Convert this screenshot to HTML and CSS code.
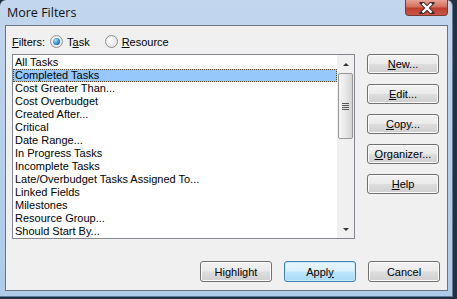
FILE: index.html
```html
<!DOCTYPE html>
<html lang="en">
<head>
    <meta charset="UTF-8">
    <title>More Filters</title>
    <link rel="stylesheet" href="styles.css">
</head>
<body>
    <div class="window">
        <div class="titlebar">
            <span class="title">More Filters</span>
            <div class="close">
                <svg width="16" height="12" viewBox="0 0 16 12">
                    <path d="M3 1 L13 11 M13 1 L3 11" stroke="#3a2a2a" stroke-width="4.2" stroke-linecap="square"/>
                    <path d="M3.5 1.5 L12.5 10.5 M12.5 1.5 L3.5 10.5" stroke="#fff" stroke-width="2.4"/>
                </svg>
            </div>
        </div>
        <div class="client">
            <div class="main">
                <div class="left">
                    <div class="filters">
                        <span class="lbl"><u>F</u>ilters:</span>
                        <span class="radio checked"></span>
                        <span class="opt">T<u>a</u>sk</span>
                        <span class="radio"></span>
                        <span class="opt"><u>R</u>esource</span>
                    </div>
                    <div class="listbox">
                        <ul class="items">
                            <li>All Tasks</li>
                            <li class="sel">Completed Tasks</li>
                            <li>Cost Greater Than...</li>
                            <li>Cost Overbudget</li>
                            <li>Created After...</li>
                            <li>Critical</li>
                            <li>Date Range...</li>
                            <li>In Progress Tasks</li>
                            <li>Incomplete Tasks</li>
                            <li>Late/Overbudget Tasks Assigned To...</li>
                            <li>Linked Fields</li>
                            <li>Milestones</li>
                            <li>Resource Group...</li>
                            <li>Should Start By...</li>
                        </ul>
                        <div class="scrollbar">
                            <div class="arrow up"></div>
                            <div class="thumb"><span class="grip"></span></div>
                            <div class="track"></div>
                            <div class="arrow down"></div>
                        </div>
                    </div>
                </div>
                <div class="side">
                    <button class="btn"><u>N</u>ew...</button>
                    <button class="btn"><u>E</u>dit...</button>
                    <button class="btn"><u>C</u>opy...</button>
                    <button class="btn"><u>O</u>rganizer...</button>
                    <button class="btn"><u>H</u>elp</button>
                </div>
            </div>
            <div class="bottom">
                <button class="btn">Hi<u>g</u>hlight</button>
                <button class="btn default">Appl<u>y</u></button>
                <button class="btn">Cancel</button>
            </div>
        </div>
    </div>
</body>
</html>
```

FILE: styles.css
```css
body {
    margin: 0;
    width: 457px;
    height: 299px;
    overflow: hidden;
    background: #22303f;
    font-family: "Liberation Sans", Arial, sans-serif;
    font-size: 11px;
    color: #000;
}
.window {
    position: relative;
    width: 453px;
    height: 297px;
    box-sizing: border-box;
    padding: 0 4px 5px 5px;
    display: flex;
    flex-direction: column;
    background: linear-gradient(180deg, #c2d7ee 0%, #b8d0ea 40%, #aecbe9 100%);
    border-right: 1px solid #5d7a99;
    border-bottom: 1px solid #5d7a99;
    border-radius: 6px 6px 0 0;
}
.titlebar {
    height: 25px;
    flex: none;
}
.title {
    display: block;
    padding: 4px 0 0 2px;
    font-family: "Open Sans", "Noto Sans", sans-serif;
    font-size: 12.5px;
    color: #111;
}
.close {
    position: absolute;
    top: 0;
    left: 405px;
    width: 43px;
    height: 16px;
    box-sizing: border-box;
    border: 1px solid #7b3a30;
    border-top: none;
    border-radius: 0 0 4px 4px;
    background: linear-gradient(180deg, #e8a394 0%, #d5705e 45%, #bf3e2a 55%, #c9574a 100%);
    display: flex;
    align-items: center;
    justify-content: center;
}
.client {
    flex: 1;
    background: #f0f0f0;
    border: 1px solid #6c7380;
    display: flex;
    flex-direction: column;
    padding: 0 6px 0 6px;
}
.main {
    display: flex;
}
.left {
    display: flex;
    flex-direction: column;
}
.filters {
    display: flex;
    align-items: center;
    height: 13px;
    margin-top: 9px;
    margin-bottom: 6px;
}
.lbl {
    margin-right: 5px;
}
.radio {
    width: 11px;
    height: 11px;
    border: 1px solid #8f8f8f;
    border-radius: 50%;
    background: radial-gradient(circle at 40% 40%, #ffffff, #dcdcdc);
    margin-right: 4px;
    position: relative;
}
.radio.checked::after {
    content: "";
    position: absolute;
    left: 2px;
    top: 2px;
    width: 7px;
    height: 7px;
    border-radius: 50%;
    background: radial-gradient(circle at 35% 35%, #9ee0ff, #1b6fb8 70%, #0f4a86);
}
.opt {
    margin-right: 15px;
}
.listbox {
    width: 343px;
    height: 185px;
    box-sizing: border-box;
    border: 1px solid #828790;
    background: #fff;
    display: flex;
}
.items {
    list-style: none;
    margin: 0;
    padding: 1px 0 0;
    flex: 1;
}
.items li {
    height: 13px;
    line-height: 13px;
    padding-left: 2px;
    white-space: nowrap;
}
.items li.sel {
    background: #96c8fb;
    outline: 1px dotted #5b4a30;
    outline-offset: -1px;
}
.scrollbar {
    width: 17px;
    background: #f0f0f0;
    display: flex;
    flex-direction: column;
    align-items: center;
}
.arrow {
    width: 0;
    height: 0;
    border-left: 3px solid transparent;
    border-right: 3px solid transparent;
}
.arrow.up {
    border-bottom: 3px solid #333;
    margin: 8px 0 7px;
}
.arrow.down {
    border-top: 3px solid #333;
    margin: 6px 0 7px;
}
.thumb {
    width: 15px;
    height: 66px;
    box-sizing: border-box;
    border: 1px solid #979797;
    border-radius: 2px;
    background: linear-gradient(90deg, #f6f6f6, #e8e8e8 50%, #d4d4d4);
    display: flex;
    align-items: center;
    justify-content: center;
}
.grip {
    width: 7px;
    height: 7px;
    background: repeating-linear-gradient(180deg, #555 0 1px, transparent 1px 2px);
}
.track {
    flex: 1;
}
.side {
    display: flex;
    flex-direction: column;
    gap: 10px;
    margin-left: 12px;
    padding-top: 28px;
}
.btn {
    width: 72px;
    height: 20px;
    padding: 0;
    font-family: "Liberation Sans", Arial, sans-serif;
    font-size: 11px;
    color: #000;
    border: 1px solid #707070;
    border-radius: 3px;
    background: linear-gradient(180deg, #f2f2f2 0%, #ebebeb 48%, #dddddd 52%, #cfcfcf 100%);
    box-shadow: inset 0 0 0 1px #fcfcfc;
}
.btn.default {
    border-color: #3c7fb1;
    background: linear-gradient(180deg, #eaf6fd 0%, #d9f0fc 48%, #bee6fd 52%, #a7d9f5 100%);
    box-shadow: inset 0 0 0 1px #c6e8fb;
}
.bottom {
    display: flex;
    justify-content: flex-end;
    gap: 12px;
    margin-top: 22px;
    padding-right: 1px;
}
.bottom .btn {
    height: 21px;
}
```
